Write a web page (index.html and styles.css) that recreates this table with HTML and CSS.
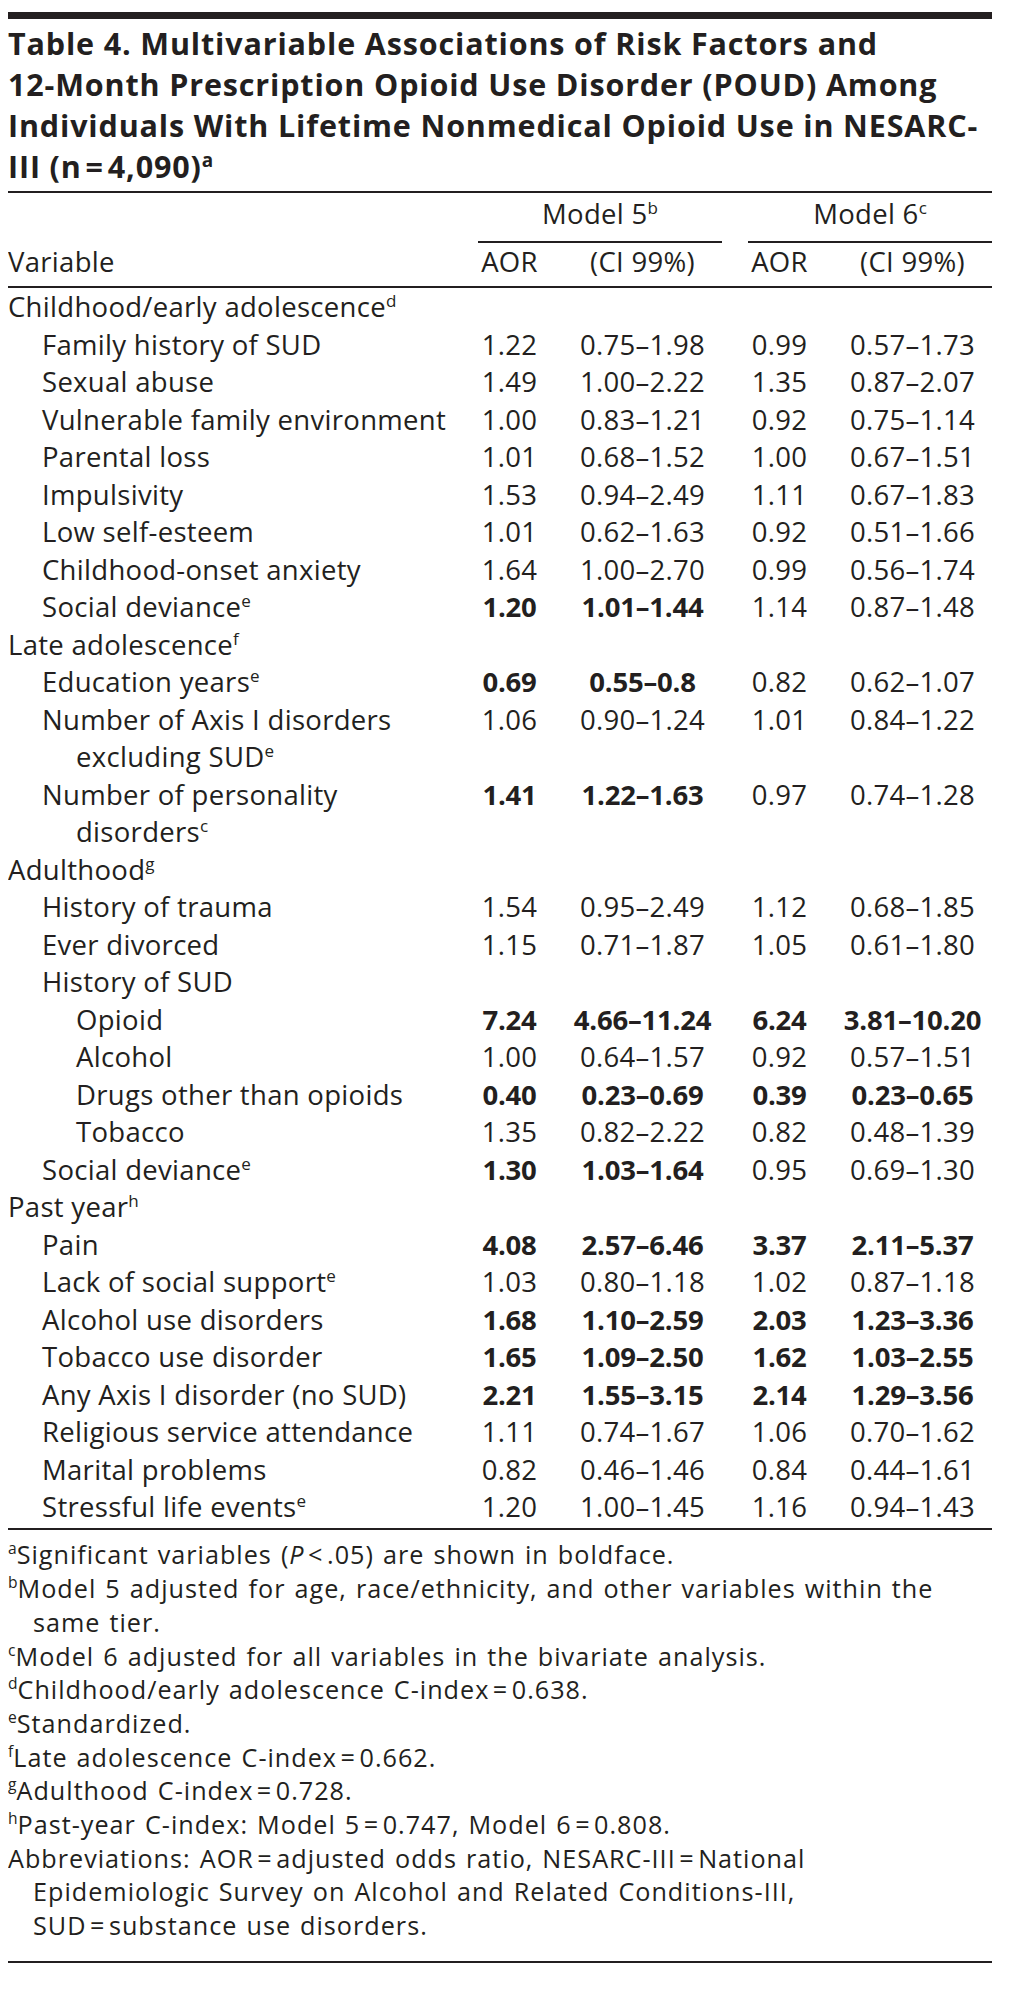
FILE: index.html
```html
<!DOCTYPE html>
<html lang="en">
<head>
<meta charset="utf-8">
<title>Table 4</title>
<link rel="stylesheet" href="styles.css">
</head>
<body>
<div class="page">
  <div class="topbar"></div>
  <h1 class="title">Table 4. Multivariable Associations of Risk Factors and<br>12-Month Prescription Opioid Use Disorder (POUD) Among<br>Individuals With Lifetime Nonmedical Opioid Use in NESARC-<br>III (n&#8202;=&#8202;4,090)<sup>a</sup></h1>

  <div class="tbl">
    <div class="thead">
      <div class="grp g5">Model 5<sup>b</sup></div>
      <div class="grp g6">Model 6<sup>c</sup></div>
      <div class="hc hv">Variable</div>
      <div class="hc num h2">AOR</div>
      <div class="hc num c h3">(CI 99%)</div>
      <div class="hc num h5">AOR</div>
      <div class="hc num c h6">(CI 99%)</div>
    </div>

    <div class="tbody">
      <div class="row"><div class="lab l0">Childhood/early adolescence<sup>d</sup></div></div>
      <div class="row"><div class="lab l1">Family history of SUD</div><div class="num a">1.22</div><div class="num c">0.75–1.98</div><div class="num a a6">0.99</div><div class="num c">0.57–1.73</div></div>
      <div class="row"><div class="lab l1">Sexual abuse</div><div class="num a">1.49</div><div class="num c">1.00–2.22</div><div class="num a a6">1.35</div><div class="num c">0.87–2.07</div></div>
      <div class="row"><div class="lab l1">Vulnerable family environment</div><div class="num a">1.00</div><div class="num c">0.83–1.21</div><div class="num a a6">0.92</div><div class="num c">0.75–1.14</div></div>
      <div class="row"><div class="lab l1">Parental loss</div><div class="num a">1.01</div><div class="num c">0.68–1.52</div><div class="num a a6">1.00</div><div class="num c">0.67–1.51</div></div>
      <div class="row"><div class="lab l1">Impulsivity</div><div class="num a">1.53</div><div class="num c">0.94–2.49</div><div class="num a a6">1.11</div><div class="num c">0.67–1.83</div></div>
      <div class="row"><div class="lab l1">Low self-esteem</div><div class="num a">1.01</div><div class="num c">0.62–1.63</div><div class="num a a6">0.92</div><div class="num c">0.51–1.66</div></div>
      <div class="row"><div class="lab l1">Childhood-onset anxiety</div><div class="num a">1.64</div><div class="num c">1.00–2.70</div><div class="num a a6">0.99</div><div class="num c">0.56–1.74</div></div>
      <div class="row"><div class="lab l1">Social deviance<sup>e</sup></div><div class="num a b">1.20</div><div class="num c b">1.01–1.44</div><div class="num a a6">1.14</div><div class="num c">0.87–1.48</div></div>

      <div class="row"><div class="lab l0">Late adolescence<sup>f</sup></div></div>
      <div class="row"><div class="lab l1">Education years<sup>e</sup></div><div class="num a b">0.69</div><div class="num c b">0.55–0.8</div><div class="num a a6">0.82</div><div class="num c">0.62–1.07</div></div>
      <div class="row"><div class="lab l1">Number of Axis I disorders<br>excluding SUD<sup>e</sup></div><div class="num a">1.06</div><div class="num c">0.90–1.24</div><div class="num a a6">1.01</div><div class="num c">0.84–1.22</div></div>
      <div class="row"><div class="lab l1">Number of personality<br>disorders<sup>c</sup></div><div class="num a b">1.41</div><div class="num c b">1.22–1.63</div><div class="num a a6">0.97</div><div class="num c">0.74–1.28</div></div>

      <div class="row"><div class="lab l0">Adulthood<sup>g</sup></div></div>
      <div class="row"><div class="lab l1">History of trauma</div><div class="num a">1.54</div><div class="num c">0.95–2.49</div><div class="num a a6">1.12</div><div class="num c">0.68–1.85</div></div>
      <div class="row"><div class="lab l1">Ever divorced</div><div class="num a">1.15</div><div class="num c">0.71–1.87</div><div class="num a a6">1.05</div><div class="num c">0.61–1.80</div></div>
      <div class="row"><div class="lab l1">History of SUD</div></div>
      <div class="row"><div class="lab l2">Opioid</div><div class="num a b">7.24</div><div class="num c b">4.66–11.24</div><div class="num a a6 b">6.24</div><div class="num c b">3.81–10.20</div></div>
      <div class="row"><div class="lab l2">Alcohol</div><div class="num a">1.00</div><div class="num c">0.64–1.57</div><div class="num a a6">0.92</div><div class="num c">0.57–1.51</div></div>
      <div class="row"><div class="lab l2">Drugs other than opioids</div><div class="num a b">0.40</div><div class="num c b">0.23–0.69</div><div class="num a a6 b">0.39</div><div class="num c b">0.23–0.65</div></div>
      <div class="row"><div class="lab l2">Tobacco</div><div class="num a">1.35</div><div class="num c">0.82–2.22</div><div class="num a a6">0.82</div><div class="num c">0.48–1.39</div></div>
      <div class="row"><div class="lab l1">Social deviance<sup>e</sup></div><div class="num a b">1.30</div><div class="num c b">1.03–1.64</div><div class="num a a6">0.95</div><div class="num c">0.69–1.30</div></div>

      <div class="row"><div class="lab l0">Past year<sup>h</sup></div></div>
      <div class="row"><div class="lab l1">Pain</div><div class="num a b">4.08</div><div class="num c b">2.57–6.46</div><div class="num a a6 b">3.37</div><div class="num c b">2.11–5.37</div></div>
      <div class="row"><div class="lab l1">Lack of social support<sup>e</sup></div><div class="num a">1.03</div><div class="num c">0.80–1.18</div><div class="num a a6">1.02</div><div class="num c">0.87–1.18</div></div>
      <div class="row"><div class="lab l1">Alcohol use disorders</div><div class="num a b">1.68</div><div class="num c b">1.10–2.59</div><div class="num a a6 b">2.03</div><div class="num c b">1.23–3.36</div></div>
      <div class="row"><div class="lab l1">Tobacco use disorder</div><div class="num a b">1.65</div><div class="num c b">1.09–2.50</div><div class="num a a6 b">1.62</div><div class="num c b">1.03–2.55</div></div>
      <div class="row"><div class="lab l1">Any Axis I disorder (no SUD)</div><div class="num a b">2.21</div><div class="num c b">1.55–3.15</div><div class="num a a6 b">2.14</div><div class="num c b">1.29–3.56</div></div>
      <div class="row"><div class="lab l1">Religious service attendance</div><div class="num a">1.11</div><div class="num c">0.74–1.67</div><div class="num a a6">1.06</div><div class="num c">0.70–1.62</div></div>
      <div class="row"><div class="lab l1">Marital problems</div><div class="num a">0.82</div><div class="num c">0.46–1.46</div><div class="num a a6">0.84</div><div class="num c">0.44–1.61</div></div>
      <div class="row"><div class="lab l1">Stressful life events<sup>e</sup></div><div class="num a">1.20</div><div class="num c">1.00–1.45</div><div class="num a a6">1.16</div><div class="num c">0.94–1.43</div></div>
    </div>
  </div>

  <div class="notes">
    <p class="fn"><sup>a</sup>Significant variables (<i>P</i>&#8202;&lt;&#8202;.05) are shown in boldface.</p>
    <p class="fn"><sup>b</sup>Model 5 adjusted for age, race/ethnicity, and other variables within the<br>same tier.</p>
    <p class="fn"><sup>c</sup>Model 6 adjusted for all variables in the bivariate analysis.</p>
    <p class="fn"><sup>d</sup>Childhood/early adolescence C-index&#8202;=&#8202;0.638.</p>
    <p class="fn"><sup>e</sup>Standardized.</p>
    <p class="fn"><sup>f</sup>Late adolescence C-index&#8202;=&#8202;0.662.</p>
    <p class="fn"><sup>g</sup>Adulthood C-index&#8202;=&#8202;0.728.</p>
    <p class="fn"><sup>h</sup>Past-year C-index: Model 5&#8202;=&#8202;0.747, Model 6&#8202;=&#8202;0.808.</p>
    <p class="fn">Abbreviations: AOR&#8202;=&#8202;adjusted odds ratio, NESARC-III&#8202;=&#8202;National<br>Epidemiologic Survey on Alcohol and Related Conditions-III,<br>SUD&#8202;=&#8202;substance use disorders.</p>
  </div>
</div>
</body>
</html>
```
FILE: styles.css
```css
body {
  margin: 8px;
  font-family: "Open Sans", "Noto Sans", sans-serif;
  color: #231f20;
  background: #fff;
}

.page {
  width: 984px;
}

.topbar {
  height: 7px;
  margin-top: 4px;
  background: #231f20;
}

.title {
  margin: 4px 0 4px;
  font-size: 30.5px;
  line-height: 41px;
  font-weight: 700;
  letter-spacing: 0.85px;
}

sup {
  font-size: 0.62em;
  line-height: 0;
  vertical-align: 0.6em;
  letter-spacing: 0;
}

.tbl {
  border-top: 2px solid #231f20;
  border-bottom: 2px solid #231f20;
  font-size: 27.5px;
  line-height: 37.5px;
  letter-spacing: 0.3px;
}

.thead,
.row {
  display: grid;
  grid-template-columns: 470px 63px 181px 26px 63px 181px;
}

.thead {
  border-bottom: 2px solid #231f20;
}

.grp {
  grid-row: 1;
  padding: 1.5px 0 9px;
  line-height: 37px;
  text-align: center;
  border-bottom: 2px solid #231f20;
}

.g5 { grid-column: 2 / 4; }
.g6 { grid-column: 5 / 7; }

.hc {
  grid-row: 2;
  padding: 0 0 6px;
}

.hv { grid-column: 1; }
.h2 { grid-column: 2; }
.h3 { grid-column: 3; }
.h5 { grid-column: 5; }
.h6 { grid-column: 6; }

.tbody {
  padding-bottom: 2.5px;
}

.lab {
  grid-column: 1;
}

.l0 { padding-left: 34px; text-indent: -34px; }
.l1 { padding-left: 68px; text-indent: -34px; }
.l2 { padding-left: 102px; text-indent: -34px; }

.num {
  white-space: nowrap;
  text-align: center;
}

.a6 { grid-column: 5; }

.c {
  padding-left: 22px;
}

.b {
  font-weight: 700;
  letter-spacing: -0.2px;
}

.notes {
  margin-top: 8.4px;
  padding-bottom: 18px;
  border-bottom: 2px solid #231f20;
}

.fn {
  margin: 0;
  padding-left: 25px;
  text-indent: -25px;
  font-size: 25.2px;
  line-height: 33.7px;
  letter-spacing: 1px;
  word-spacing: 1.5px;
}

.fn sup {
  font-size: 0.62em;
  vertical-align: 0.65em;
}
```
